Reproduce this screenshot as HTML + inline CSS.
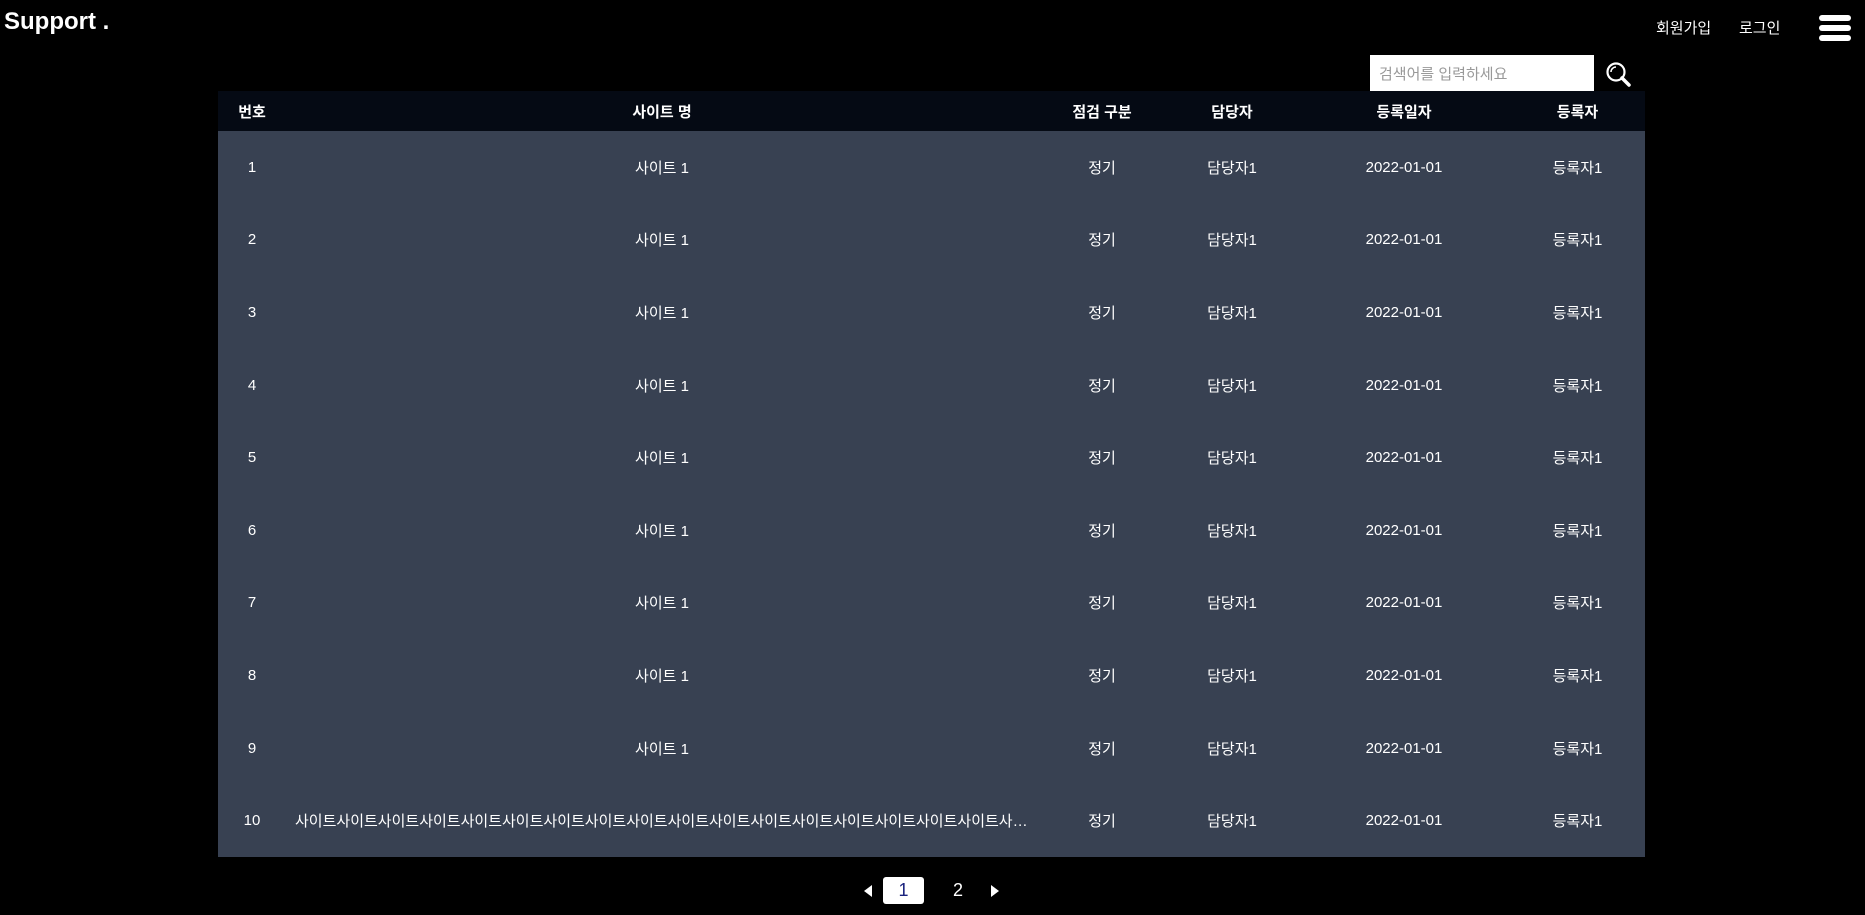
<!DOCTYPE html>
<html><head><meta charset="utf-8"><style>
*{margin:0;padding:0;box-sizing:border-box}
body{width:1865px;height:915px;background:#000;color:#fff;font-family:"Liberation Sans","Noto Sans CJK KR",sans-serif;position:relative;overflow:hidden}
.logo{position:absolute;left:4px;top:8px;font-size:24px;font-weight:bold}
.nav{position:absolute;top:17px;font-size:15px}
.ham{position:absolute;left:1819px;width:32px;height:6px;border-radius:3px;background:#fff}
.search{position:absolute;left:1370px;top:55px;width:224px;height:36px;background:#fff;color:#999;font-size:15px;padding:8px 9px}
table{position:absolute;left:218px;top:91px;width:1427px;border-collapse:collapse;table-layout:fixed}
th{background:#050a14;height:40px;font-size:15px;font-weight:bold}
td{background:#384152;height:72.6px;font-size:15px;text-align:center;white-space:nowrap;overflow:hidden;text-overflow:ellipsis}
td.n{padding:0 9px}
.pg{position:absolute;top:877px;font-size:18px}
</style></head><body>
<div class="logo">Support .</div>
<div class="nav" style="left:1656px">회원가입</div>
<div class="nav" style="left:1739px">로그인</div>
<div class="ham" style="top:15px"></div><div class="ham" style="top:25px"></div><div class="ham" style="top:35px"></div>
<div class="search">검색어를 입력하세요</div>
<svg style="position:absolute;left:1604px;top:60px" width="30" height="30" viewBox="0 0 30 30"><circle cx="12" cy="12" r="8.5" fill="none" stroke="#fff" stroke-width="2.2"/><path d="M7 12a5 5 0 0 1 5-5" stroke="#fff" stroke-width="1.5" fill="none"/><path d="M18 18l7 7" stroke="#fff" stroke-width="3.5" stroke-linecap="round"/></svg>
<table>
<colgroup><col style="width:68px"><col style="width:752px"><col style="width:128px"><col style="width:132px"><col style="width:212px"><col style="width:135px"></colgroup>
<tr><th>번호</th><th>사이트 명</th><th>점검 구분</th><th>담당자</th><th>등록일자</th><th>등록자</th></tr>
<tr><td>1</td><td>사이트 1</td><td>정기</td><td>담당자1</td><td>2022-01-01</td><td>등록자1</td></tr>
<tr><td>2</td><td>사이트 1</td><td>정기</td><td>담당자1</td><td>2022-01-01</td><td>등록자1</td></tr>
<tr><td>3</td><td>사이트 1</td><td>정기</td><td>담당자1</td><td>2022-01-01</td><td>등록자1</td></tr>
<tr><td>4</td><td>사이트 1</td><td>정기</td><td>담당자1</td><td>2022-01-01</td><td>등록자1</td></tr>
<tr><td>5</td><td>사이트 1</td><td>정기</td><td>담당자1</td><td>2022-01-01</td><td>등록자1</td></tr>
<tr><td>6</td><td>사이트 1</td><td>정기</td><td>담당자1</td><td>2022-01-01</td><td>등록자1</td></tr>
<tr><td>7</td><td>사이트 1</td><td>정기</td><td>담당자1</td><td>2022-01-01</td><td>등록자1</td></tr>
<tr><td>8</td><td>사이트 1</td><td>정기</td><td>담당자1</td><td>2022-01-01</td><td>등록자1</td></tr>
<tr><td>9</td><td>사이트 1</td><td>정기</td><td>담당자1</td><td>2022-01-01</td><td>등록자1</td></tr>
<tr><td>10</td><td class="n" style="text-align:left">사이트사이트사이트사이트사이트사이트사이트사이트사이트사이트사이트사이트사이트사이트사이트사이트사이트사이트사이트</td><td>정기</td><td>담당자1</td><td>2022-01-01</td><td>등록자1</td></tr>
</table>
<svg style="position:absolute;left:863px;top:884px" width="10" height="14"><path d="M9 1L1 7l8 6z" fill="#fff"/></svg>
<div class="pg" style="left:883px;width:41px;height:27px;background:#fff;border-radius:3px;color:#1a237e;text-align:center;line-height:27px">1</div>
<div class="pg" style="left:953px;line-height:27px">2</div>
<svg style="position:absolute;left:990px;top:884px" width="10" height="14"><path d="M1 1l8 6-8 6z" fill="#fff"/></svg>
</body></html>
